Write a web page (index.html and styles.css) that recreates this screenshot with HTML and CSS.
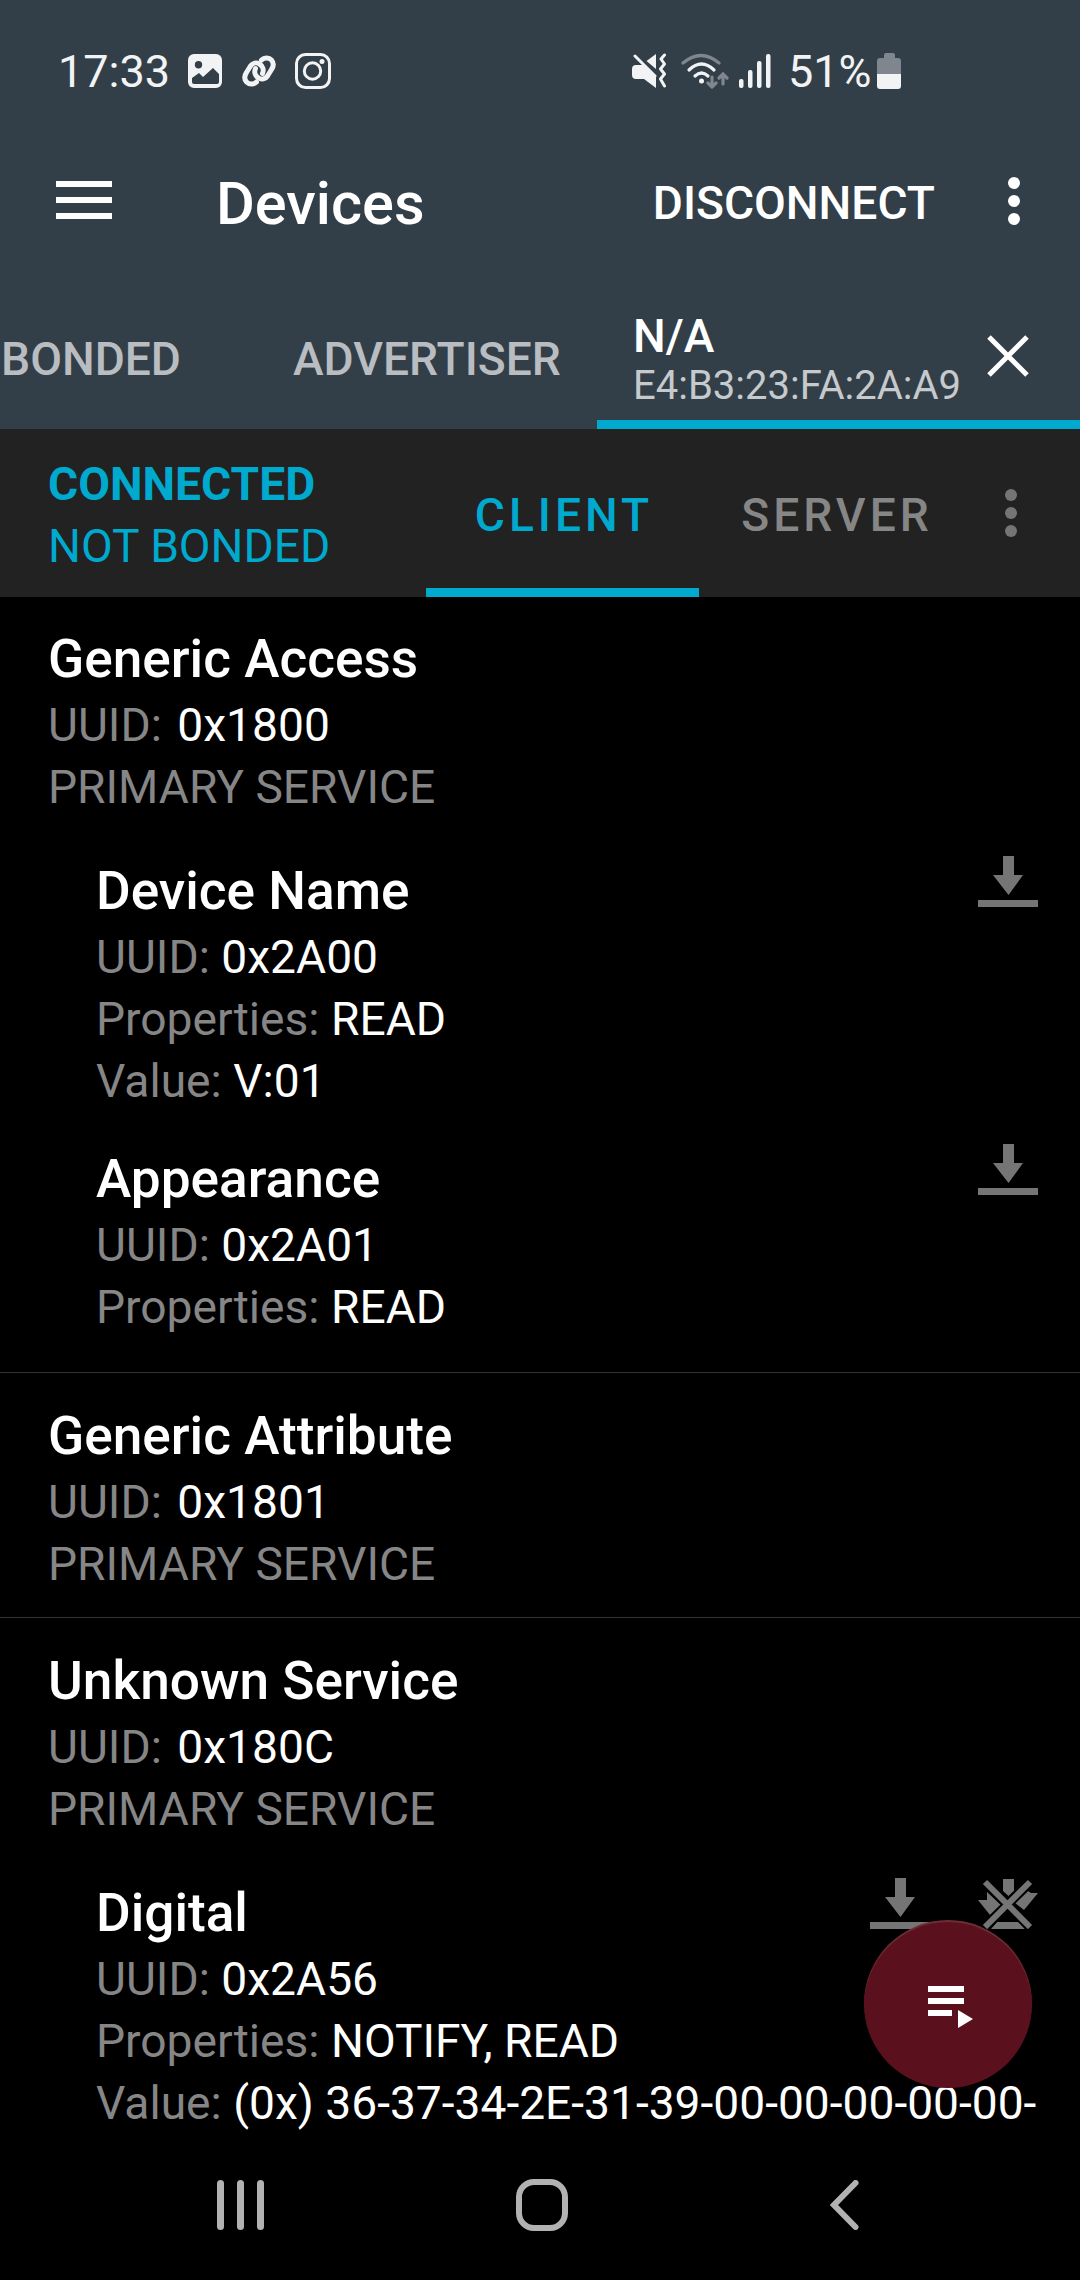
FILE: index.html
```html
<!DOCTYPE html>
<html lang="en">
<head>
  <meta charset="UTF-8" />
  <meta name="viewport" content="width=device-width, initial-scale=1.0"/>
  <title>Devices</title>
  <link rel="stylesheet" href="styles.css">
</head>
<body>

<!-- reusable icons -->
<svg class="sprite" width="0" height="0">
  <symbol id="download" viewBox="0 0 60 51">
    <path d="M25 0h11v19h9L30.500 39 15 19h10zM0 44h60v7H0z"/>
  </symbol>
  <symbol id="dots" viewBox="0 0 12 48">
    <circle cx="6" cy="6" r="6"/><circle cx="6" cy="24" r="6"/><circle cx="6" cy="42" r="6"/>
  </symbol>
</svg>

<header>
  <div class="status-bar">
    <span class="time">17:33</span>
    <svg class="st-image" width="34" height="34" viewBox="0 0 34 34">
      <path fill-rule="evenodd" d="M6 0h22a6 6 0 0 1 6 6v22a6 6 0 0 1-6 6H6a6 6 0 0 1-6-6V6a6 6 0 0 1 6-6zM10.500 7a3.700 3.700 0 1 0 0 7.400 3.700 3.700 0 0 0 0-7.400zM4 24v4a2 2 0 0 0 2 2h23a2 2 0 0 0 2-2v-8l-6-6-10 9-4-4z"/>
    </svg>
    <svg class="st-link" width="34" height="32" viewBox="0 0 34 32">
      <g fill="none" stroke="#f2f3f4" stroke-width="5" stroke-linecap="round">
        <path d="M14.500 27c-3 3-7.500 2.500-10 0-2.500-3-2-6.500 0-9.500l4-6.500c2-3 6-4 9-2 3.500 2 4.500 6 3 9.500"/>
        <path d="M19.500 5c3-3 7.500-2.500 10 0 2.500 3 2 6.500 0 9.500l-4 6.500c-2 3-6 4-9 2-3.500-2-4.500-6-3-9.500"/>
      </g>
    </svg>
    <svg class="st-insta" width="36" height="36" viewBox="0 0 36 36">
      <g fill="none" stroke="#f2f3f4" stroke-width="3">
        <rect x="1.500" y="1.500" width="33" height="33" rx="9"/>
        <circle cx="17.500" cy="18" r="8.200"/>
      </g>
      <circle cx="27" cy="8.500" r="2.500"/>
    </svg>
    <svg class="st-mute" width="36" height="36" viewBox="0 0 36 36">
      <path d="M24 1v15l-9.500-8zM4 12h8l12 11v12L12 26H4a4 4 0 0 1-4-4v-6a4 4 0 0 1 4-4z"/>
      <path d="M3 3l20 20M32.500 2L29 6l3.500 5-4 5 4 5-4 5 4 7" fill="none" stroke="#f2f3f4" stroke-width="3" stroke-linecap="round" stroke-linejoin="round"/>
    </svg>
    <svg class="st-wifi" width="48" height="36" viewBox="0 0 48 36">
      <g fill="none" stroke="#f2f3f4" stroke-width="3.200" stroke-linecap="round">
        <path class="dim" d="M2 10q18-15 36 0"/>
        <path d="M8 17q12.500-12 25 0"/>
        <path d="M14 23q6.500-6 13 0"/>
        <path class="dim" d="M31 24v10m-4-4l4 4 4-4M42 31V21m-4 4l4-4 4 4"/>
      </g>
      <circle cx="20.500" cy="28" r="2.500"/>
    </svg>
    <svg class="st-signal" width="32" height="34" viewBox="0 0 32 34">
      <rect y="25" width="4.500" height="9" rx="2"/>
      <rect x="9" y="16" width="4.500" height="18" rx="2"/>
      <rect x="18" y="7" width="4.500" height="27" rx="2"/>
      <rect x="27" width="4.500" height="34" rx="2"/>
    </svg>
    <span class="percent">51%</span>
    <svg class="st-battery" width="24" height="36" viewBox="0 0 24 36">
      <path class="dim" d="M7 2q0-2 2-2h7q2 0 2 2v3h3q3 0 3 3v13H0V8q0-3 3-3h4z"/>
      <path d="M0 21h24v12q0 3-3 3H3q-3 0-3-3z"/>
    </svg>
  </div>

  <div class="toolbar">
    <svg class="menu" width="56" height="38" viewBox="0 0 56 38"><path d="M0 0h56v6H0zM0 16h56v6H0zM0 32h56v6H0z"/></svg>
    <h1>Devices</h1>
    <span class="action">DISCONNECT</span>
    <svg class="more" width="12" height="48"><use href="#dots"/></svg>
  </div>

  <nav class="tabs">
    <span class="tab bonded">BONDED</span>
    <span class="tab advertiser">ADVERTISER</span>
    <div class="tab active">
      <div class="device">
        <strong>N/A</strong>
        <small>E4:B3:23:FA:2A:A9</small>
      </div>
      <svg width="42" height="42" viewBox="0 0 42 42"><path d="M2 2l38 38M40 2L2 40" stroke="#fff" stroke-width="5"/></svg>
    </div>
  </nav>
</header>

<section class="connection">
  <div class="state">
    <strong>CONNECTED</strong>
    <span>NOT BONDED</span>
  </div>
  <div class="role active">CLIENT</div>
  <div class="role">SERVER</div>
  <svg class="more" width="12" height="48"><use href="#dots"/></svg>
</section>

<main>
  <section class="service">
    <h2>Generic Access</h2>
    <p class="uuid"><span>UUID:</span> 0x1800</p>
    <p><span>PRIMARY SERVICE</span></p>
    <div class="characteristic">
      <div class="info">
        <h2>Device Name</h2>
        <p><span>UUID:</span> 0x2A00</p>
        <p><span>Properties:</span> READ</p>
        <p><span>Value:</span> V:01</p>
      </div>
      <div class="icons"><svg width="60" height="51"><use href="#download"/></svg></div>
    </div>
    <div class="characteristic">
      <div class="info">
        <h2>Appearance</h2>
        <p><span>UUID:</span> 0x2A01</p>
        <p><span>Properties:</span> READ</p>
      </div>
      <div class="icons"><svg width="60" height="51"><use href="#download"/></svg></div>
    </div>
  </section>

  <section class="service">
    <h2>Generic Attribute</h2>
    <p class="uuid"><span>UUID:</span> 0x1801</p>
    <p><span>PRIMARY SERVICE</span></p>
  </section>

  <section class="service">
    <h2>Unknown Service</h2>
    <p class="uuid"><span>UUID:</span> 0x180C</p>
    <p><span>PRIMARY SERVICE</span></p>
    <div class="characteristic">
      <div class="info">
        <h2>Digital</h2>
        <p><span>UUID:</span> 0x2A56</p>
        <p><span>Properties:</span> NOTIFY, READ</p>
        <p><span>Value:</span> (0x) 36-37-34-2E-31-39-00-00-00-00-00-</p>
      </div>
      <div class="icons">
        <svg width="60" height="51"><use href="#download"/></svg>
        <svg width="60" height="51" viewBox="0 0 60 51">
          <path d="M25 1h11v12l-5.500 5-5.500-5zM0 22h9v-8l14 13-11 10zM60 15L46 32l-9-7 13-12 3 2zM13 51l6-7h22l6 7z"/>
          <path d="M7 4l45 45M52 4L7 49" stroke="#000" stroke-width="10"/>
          <path d="M7 4l45 45M52 4L7 49" stroke="#757575" stroke-width="6"/>
        </svg>
      </div>
    </div>
  </section>
</main>

<button class="fab">
  <svg width="46" height="42" viewBox="0 0 46 42"><path d="M0 0h36v6H0zM0 12h36v6H0zM0 24h24v6H0zM30 24l15 9-15 9z"/></svg>
</button>

<footer class="nav-bar">
  <svg width="47" height="50" viewBox="0 0 47 50">
    <rect width="7" height="50" rx="3.500"/><rect x="20" width="7" height="50" rx="3.500"/><rect x="40" width="7" height="50" rx="3.500"/>
  </svg>
  <svg class="home" width="52" height="52" viewBox="0 0 52 52"><rect x="3" y="3" width="46" height="46" rx="15" fill="none" stroke="#b2b2b2" stroke-width="6"/></svg>
  <svg class="back" width="29" height="50" viewBox="0 0 29 50"><path d="M25.500 3L4 25l21.500 22" fill="none" stroke="#b2b2b2" stroke-width="6" stroke-linecap="round"/></svg>
</footer>

</body>
</html>
```

FILE: styles.css
```css
:root {
  --accent: #00a9ce;
  --header: #333f48;
  --bar: #222222;
  --muted: #868686;
  --icon: #757575;
  --status: #f2f3f4;
}

* {
  margin: 0;
  padding: 0;
  box-sizing: border-box;
}

html, body {
  height: 100%;
  overflow: hidden;
}

body {
  display: flex;
  flex-direction: column;
  width: 1080px;
  background: #000;
  color: #fff;
  font-family: Roboto, sans-serif;
  font-size: 46.150px;
}

svg {
  display: block;
  flex: none;
  fill: #fff;
}

.sprite {
  position: absolute;
}

header {
  flex: none;
  height: 429px;
  background: var(--header);
}

.status-bar {
  display: flex;
  align-items: center;
  height: 142px;
  padding-left: 58px;
  color: var(--status);
  font-size: 45px;
}

.status-bar svg {
  fill: var(--status);
}

.status-bar .dim {
  opacity: 0.4;
}

.time {
  width: 130px;
}

.st-link {
  margin-left: 20px;
}

.st-insta {
  margin-left: 19px;
}

.st-mute {
  margin-left: 301px;
}

.st-wifi {
  margin-left: 13px;
}

.st-signal {
  margin-left: 10px;
}

.percent {
  width: 89px;
  margin-left: 17px;
}

.toolbar {
  display: flex;
  align-items: center;
  height: 118px;
  padding: 0 60px 0 56px;
}

.menu {
  margin-top: -2px;
}

.toolbar h1 {
  margin-left: 104px;
  margin-top: 6px;
  font-size: 59.500px;
  font-weight: 500;
}

.action {
  margin-left: auto;
  margin-top: 4px;
  font-weight: 500;
}

.toolbar .more {
  margin-left: 73px;
}

.tabs {
  display: flex;
  height: 169px;
}

.tab {
  display: flex;
  align-items: center;
  padding-top: 29px;
  font-weight: 500;
}

.bonded,
.advertiser {
  color: #b9bdc1;
}

.bonded {
  width: 293px;
  padding-left: 1px;
}

.advertiser {
  width: 304px;
}

.tab.active {
  flex: 1;
  padding: 32px 51px 0 36px;
  justify-content: space-between;
  border-bottom: 9px solid var(--accent);
}

.device {
  padding-top: 9px;
}

.device strong,
.device small {
  display: block;
  line-height: 49px;
}

.device strong {
  font-weight: 500;
}

.device small {
  color: #c6cacd;
  font-size: 40px;
  font-weight: 400;
}

.connection {
  flex: none;
  display: flex;
  align-items: center;
  height: 168px;
  background: var(--bar);
}

.state {
  width: 426px;
  padding-top: 3px;
  padding-left: 48px;
  color: var(--accent);
  line-height: 62px;
}

.state strong,
.state span {
  display: block;
}

.role {
  display: flex;
  align-items: center;
  justify-content: center;
  width: 273px;
  height: 100%;
  padding-top: 13px;
  padding-left: 3px;
  border-bottom: 9px solid transparent;
  color: var(--muted);
  font-weight: 500;
  letter-spacing: 4px;
}

.role.active {
  color: var(--accent);
  border-color: var(--accent);
}

.connection .more {
  margin-left: 33px;
  fill: var(--icon);
}

main {
  flex: 1;
  overflow: hidden;
}

.service {
  padding: 31px 42px 22px 48px;
  border-bottom: 1px solid #333;
}

.service:first-child {
  padding-top: 30px;
  padding-bottom: 34px;
}

.service:last-child {
  border: 0;
}

h2 {
  margin-bottom: 3px;
  font-size: 53.200px;
  font-weight: 500;
  line-height: 64px;
}

p {
  line-height: 62px;
  white-space: nowrap;
}

p span {
  color: var(--muted);
}

.uuid span {
  margin-right: 4px;
}

.characteristic {
  display: flex;
  margin-top: 41px;
  padding-left: 48px;
}

.characteristic + .characteristic {
  margin-top: 35px;
}

.info {
  flex: 1;
  min-width: 0;
}

/* the icons share the row with the text, long values run under them */
.icons {
  display: flex;
  gap: 48px;
  width: 0;
  margin-top: -3px;
  justify-content: flex-end;
}

.icons svg {
  fill: var(--icon);
}

.fab {
  position: absolute;
  left: 864px;
  top: 1920px;
  display: flex;
  align-items: center;
  width: 168px;
  height: 168px;
  padding-top: 6px;
  padding-left: 64px;
  border: 0;
  border-radius: 50%;
  background: #5b111d;
  box-shadow: inset 0 2px 1px rgba(255, 255, 255, 0.12);
}

.nav-bar {
  flex: none;
  display: flex;
  align-items: center;
  height: 140px;
  padding: 0 0 10px 217px;
}

.nav-bar svg {
  fill: #b2b2b2;
}

.home {
  margin-left: 252px;
}

.back {
  margin-left: 262px;
}
```
